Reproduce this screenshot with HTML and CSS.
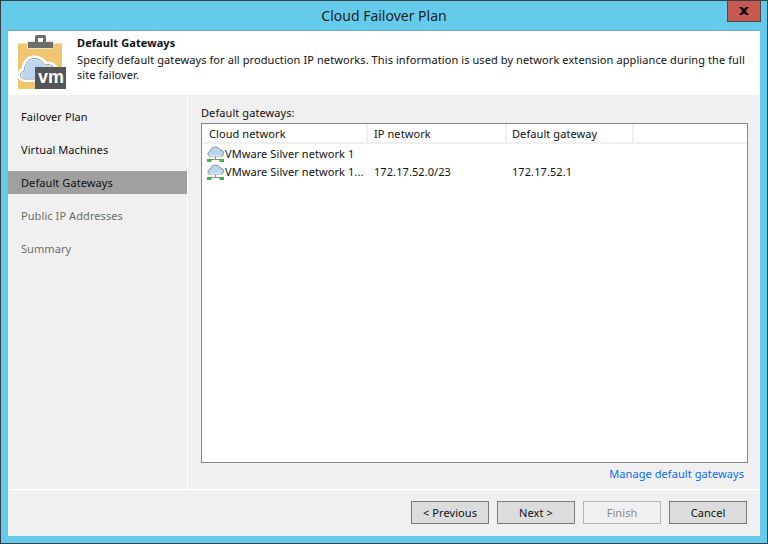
FILE: index.html
```html
<!DOCTYPE html>
<html lang="en">
<head>
<meta charset="utf-8">
<title>Cloud Failover Plan</title>
<link rel="stylesheet" href="styles.css">
</head>
<body>
<div class="window">
  <div class="titlebar">
    <div class="title">Cloud Failover Plan</div>
    <div class="close"><svg width="10" height="8" viewBox="0 0 10 8"><path d="M0 0h3l2 2 2-2h3L6.500 4 10 8H7L5 6 3 8H0l3.500-4z" fill="#000"/></svg></div>
  </div>
  <div class="client">
    <header class="header">
      <svg class="logo" width="48" height="54" viewBox="0 0 48 54">
        <rect x="0" y="8.500" width="44" height="45.500" fill="#f0c672"/>
        <rect x="9" y="6" width="26" height="8" fill="#f7e3b8"/>
        <path d="M10 13V7h7V1.500A1.500 1.500 0 0 1 18.500 0h8A1.500 1.500 0 0 1 28 1.500V7h7v6z" fill="#6d6d6d"/>
        <rect x="20" y="3" width="5" height="4" fill="#fff"/>
        <path d="M7 45C3.500 45 1.500 42.500 1.500 40c0-2.500 1.500-4.500 3.700-5C5.800 27 10.500 22.500 16 22.500c5 0 9.500 2.700 11.500 6.500 1-.4 2-.5 3-.5 4.500 0 7.500 3 7.500 7v9.500z" fill="#bcd6ee" stroke="#fff" stroke-width="4"/>
        <path d="M7 44C3.500 44 2.500 42 2.500 40c0-2.200 1.500-3.800 3.700-4C6.800 28 11 23.500 16 23.500c5 0 8.800 2.700 11 6.700 1-.4 2-.7 3-.7 4 0 7 3 7 7" fill="none" stroke="#8c9aa6" stroke-width="1"/>
        <path d="M7 44h30" fill="none" stroke="#8c9aa6" stroke-width="1"/>
        <rect x="17" y="32" width="31" height="22" fill="#555"/>
        <text x="33" y="48" class="vm">vm</text>
      </svg>
      <div class="header-text">
        <div class="header-title">Default Gateways</div>
        <p class="header-desc">Specify default gateways for all production IP networks. This information is used by network extension appliance during the full site failover.</p>
      </div>
    </header>
    <div class="middle">
      <nav class="steps">
        <div class="step">Failover Plan</div>
        <div class="step">Virtual Machines</div>
        <div class="step current">Default Gateways</div>
        <div class="step muted">Public IP Addresses</div>
        <div class="step muted">Summary</div>
      </nav>
      <main class="panel">
        <div class="panel-label">Default gateways:</div>
        <div class="list">
          <div class="row head">
            <div class="cell c1">Cloud network</div>
            <div class="cell c2">IP network</div>
            <div class="cell c3">Default gateway</div>
            <div class="cell c4"></div>
          </div>
          <div class="row item">
            <div class="cell c1 name">
              <svg class="net" width="18" height="17" viewBox="0 0 18 17"><path d="M4.500 10.500C2.500 10.500 1 9.500 1 7.700 1 6.400 2 5.300 3.300 5.200 3.800 2.800 5.800 1 8.500 1c2.300 0 4 1.300 4.800 3.100 2.200-.2 3.200 1.400 3.200 3.400 0 1.700-1.200 3-3 3z" fill="#b9d5ef" stroke="#868e95"/><path d="M3 9.500h11v1H3z" fill="#fff"/><path d="M8.500 10.500v3M4 13.500h9" stroke="#868e95" fill="none"/><rect x="0" y="13" width="4.500" height="3" fill="#3fb53f"/><rect x="12.500" y="13" width="4.500" height="3" fill="#3fb53f"/></svg>
              <span>VMware Silver network 1</span>
            </div>
          </div>
          <div class="row item">
            <div class="cell c1 name">
              <svg class="net" width="18" height="17" viewBox="0 0 18 17"><path d="M4.500 10.500C2.500 10.500 1 9.500 1 7.700 1 6.400 2 5.300 3.300 5.200 3.800 2.800 5.800 1 8.500 1c2.300 0 4 1.300 4.800 3.100 2.200-.2 3.200 1.400 3.200 3.400 0 1.700-1.200 3-3 3z" fill="#b9d5ef" stroke="#868e95"/><path d="M3 9.500h11v1H3z" fill="#fff"/><path d="M8.500 10.500v3M4 13.500h9" stroke="#868e95" fill="none"/><rect x="0" y="13" width="4.500" height="3" fill="#3fb53f"/><rect x="12.500" y="13" width="4.500" height="3" fill="#3fb53f"/></svg>
              <span>VMware Silver network 1...</span>
            </div>
            <div class="cell c2">172.17.52.0/23</div>
            <div class="cell c3">172.17.52.1</div>
          </div>
        </div>
        <div class="link-row"><a class="link">Manage default gateways</a></div>
      </main>
    </div>
    <footer class="footer">
      <button class="btn">&lt; Previous</button>
      <button class="btn">Next &gt;</button>
      <button class="btn disabled">Finish</button>
      <button class="btn">Cancel</button>
    </footer>
  </div>
</div>
</body>
</html>
```
FILE: styles.css
```css
* { box-sizing: border-box; }
html, body { margin: 0; padding: 0; }
body { width: 768px; height: 544px; overflow: hidden; font-family: "Noto Sans", "Open Sans", sans-serif; font-size: 11px; letter-spacing: 0.08px; color: #111; }
.window { width: 768px; height: 544px; background: #65cbeb; border: 1px solid #3a3f42; display: flex; flex-direction: column; padding: 0 7px 7px; }
.titlebar { height: 29px; flex: none; display: flex; position: relative; align-items: flex-start; justify-content: center; }
.title { font-size: 14px; line-height: 29px; letter-spacing: 0; color: #1f1f1f; }
.close { position: absolute; top: 0; right: -1px; width: 34px; height: 21px; background: #c75a50; border: 1px solid #4f4a4a; border-top: 0; display: flex; align-items: center; justify-content: center; }
.client { flex: 1; display: flex; flex-direction: column; background: #f0f0f0; min-height: 0; border-top: 1px solid #6fa8c0; }
.header { height: 64px; flex: none; background: #fff; display: flex; padding: 4px 0 0 10px; }
.logo { flex: none; margin-right: 11px; }
.vm { font-family: "Liberation Sans", sans-serif; font-size: 18px; font-weight: 700; fill: #fff; text-anchor: middle; letter-spacing: 0; }
.header-text { flex: 1; min-width: 0; padding-right: 10px; }
.header-title { font-weight: 700; line-height: 15px; }
.header-desc { margin: 2px 0 0; line-height: 15px; letter-spacing: 0.09px; }
.middle { flex: 1; display: flex; min-height: 0; }
.steps { width: 180px; flex: none; border-right: 1px solid #fff; padding-top: 10px; }
.step { height: 23px; line-height: 23px; padding-left: 13px; margin-bottom: 10px; }
.step.current { background: #a0a0a0; width: 179px; }
.step.muted { color: #6d6d6d; }
.panel { flex: 1; min-width: 0; padding: 10px 12px 0 13px; display: flex; flex-direction: column; }
.panel-label { line-height: 16px; }
.list { height: 340px; flex: none; margin-top: 2px; background: #fff; border: 1px solid #828790; }
.row { display: flex; }
.row.head { height: 20px; margin-bottom: 1px; }
.head .cell { border-right: 2px solid #f0f0f0; border-bottom: 2px solid #f0f0f0; line-height: 20px; }
.item { height: 18px; line-height: 18px; }
.cell { padding-left: 6px; white-space: nowrap; }
.c1 { width: 166px; padding-left: 7px; }
.c2 { width: 139px; }
.c3 { width: 127px; padding-left: 5px; }
.c4 { flex: 1; border-right: 0 !important; }
.name { display: flex; align-items: center; padding-left: 5px; }
.net { flex: none; }
.link-row { text-align: right; padding-right: 4px; line-height: 16px; margin-top: 3px; }
.link { color: #0a6cf0; }
.footer { height: 47px; flex: none; border-top: 1px solid #fff; display: flex; justify-content: flex-end; gap: 8px; padding: 11px 13px 0 0; }
.btn { width: 78px; height: 23px; padding: 0; font: inherit; letter-spacing: inherit; color: #111; background: #dcdcdc; border: 1px solid #7a7a7a; border-radius: 0; }
.btn.disabled { background: #f0f0f0; border-color: #b5b5b5; color: #8a8a8a; }
```
